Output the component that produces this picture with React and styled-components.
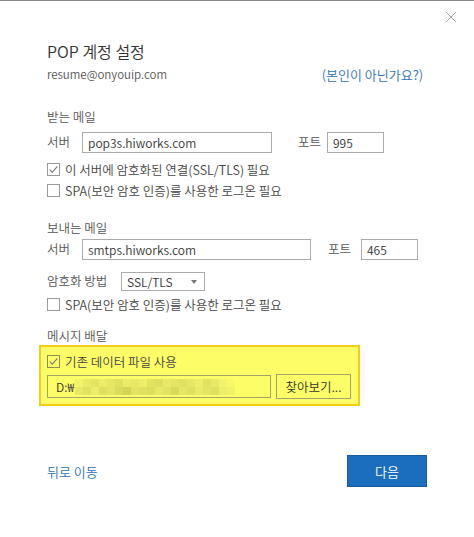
import React from "react";
import styled, { createGlobalStyle } from "styled-components";

const Global = createGlobalStyle`
  html, body { margin: 0; padding: 0; background: #fff; }
  body { font-family: "Noto Sans CJK KR", "Noto Sans", sans-serif; }
  * { box-sizing: border-box; }
`;

const Dialog = styled.div`
  position: relative;
  width: 474px;
  height: 537px;
  background: #fff;
  border-top: 1px solid #8a8a8a;
  padding: 39px 0 0 47px;
  color: #444;
  font-size: 12.5px;
  font-weight: 350;
`;

const Close = styled.button`
  position: absolute;
  top: 10px;
  right: 17px;
  width: 12px;
  height: 12px;
  padding: 0;
  border: 0;
  background: none;
  display: flex;
`;

const Title = styled.h1`
  margin: 0;
  font-size: 16px;
  line-height: 22px;
  font-weight: 350;
  color: #333;
`;

const AccountRow = styled.div`
  display: flex;
  justify-content: space-between;
  align-items: center;
  width: 376px;
  height: 18px;
  margin-top: 3px;
  line-height: 18px;
`;

const Email = styled.span`
  color: #555;
  font-size: 11.5px;
`;

const Link = styled.a`
  color: #2b72b5;
  font-size: 13px;
  text-decoration: none;
  margin-top: 2px;
`;

const SectionLabel = styled.div`
  margin-top: ${(p) => p.$mt}px;
  height: 16px;
  line-height: 16px;
  color: #555;
`;

const Row = styled.div`
  display: flex;
  align-items: center;
  margin-top: ${(p) => p.$mt || 0}px;
  height: ${(p) => p.$h || 21}px;
`;

const FieldLabel = styled.span`
  color: #555;
  width: ${(p) => p.$w}px;
  margin-left: ${(p) => p.$ml || 0}px;
  margin-top: -3px;
  flex: none;
`;

const Input = styled.div`
  width: ${(p) => p.$w}px;
  height: 21px;
  border: 1px solid #ababab;
  padding-left: 5px;
  display: flex;
  align-items: center;
  color: #333;
  font-size: 12px;
  flex: none;
`;

const Select = styled.div`
  width: 84px;
  height: 19px;
  border: 1px solid #ababab;
  padding: 0 7px 0 5px;
  display: flex;
  align-items: center;
  justify-content: space-between;
  color: #333;
  font-size: 12px;
`;

const Caret = styled.span`
  width: 0;
  height: 0;
  border-left: 3.5px solid transparent;
  border-right: 3.5px solid transparent;
  border-top: 4px solid #777;
`;

const CheckRow = styled.label`
  display: flex;
  align-items: center;
  margin-top: ${(p) => p.$mt || 0}px;
  height: 16px;
  color: #444;
`;

const Box = styled.span`
  width: 13px;
  height: 13px;
  border: 1px solid ${(p) => (p.$onYellow ? "#8e8e5a" : "#9a9a9a")};
  background: ${(p) => (p.$onYellow ? "transparent" : "#fff")};
  margin-right: 5px;
  display: flex;
  align-items: center;
  justify-content: center;
  flex: none;
`;

const Highlight = styled.div`
  width: 321px;
  height: 61px;
  margin-left: -8px;
  margin-top: 1px;
  background: #fdfd68;
  border: 2px solid #f2cf16;
  padding: 6px 0 0 6px;
`;

const PathRow = styled.div`
  display: flex;
  align-items: center;
  margin-top: 5px;
  gap: 5px;
`;

const PathInput = styled.div`
  width: 224px;
  height: 23px;
  border: 1px solid #a4a46a;
  display: flex;
  align-items: center;
  padding-left: 8px;
  color: #333;
  font-size: 12px;
`;

const Blur = styled.div`
  display: grid;
  grid-template-columns: repeat(20, 8px);
  grid-auto-rows: 8px;
  margin-left: 1px;
`;

const Cell = styled.span`
  display: block;
`;

const BrowseButton = styled.button`
  width: 75px;
  height: 25px;
  border: 1px solid #a4a46a;
  background: transparent;
  font-family: inherit;
  font-weight: 350;
  font-size: 12.5px;
  color: #333;
  padding: 0;
`;

const Footer = styled.div`
  display: flex;
  align-items: center;
  justify-content: space-between;
  width: 380px;
  margin-top: 49px;
`;

const BackLink = styled.a`
  color: #2b72b5;
  font-size: 13px;
  text-decoration: none;
`;

const NextButton = styled.button`
  width: 80px;
  height: 32px;
  background: #1b6ebd;
  border: 1px solid #175b9c;
  color: #fff;
  font-family: inherit;
  font-weight: 350;
  font-size: 13px;
  padding: 0;
`;

const Check = () => (
  <svg width="11" height="11" viewBox="0 0 11 11">
    <path d="M1.8 5.6 L4.3 8.2 L9.4 2.4" fill="none" stroke="#7a7a7a" strokeWidth="1.1" />
  </svg>
);

const blurColors = [
  "#f3f36b", "#eaea66", "#e4e463", "#ecec67", "#e6e664", "#e1e160", "#ebeb66", "#e8e865", "#eeee68", "#e3e362",
  "#dede5f", "#e9e965", "#e5e563", "#e0e061", "#e7e764", "#eded68", "#e2e262", "#e9e966", "#f2f26c", "#f8f86a",
  "#e8e866", "#e2e262", "#eded69", "#e0e060", "#e6e664", "#dcdc5c", "#d4d456", "#e4e462", "#e1e161", "#dddd5e",
  "#e8e865", "#e3e363", "#d9d95b", "#e6e664", "#e0e060", "#eaea66", "#e5e564", "#dfdf60", "#eeee69", "#f3f36b",
];

export default function App() {
  return (
    <>
      <Global />
      <Dialog>
        <Close aria-label="닫기">
          <svg width="12" height="12" viewBox="0 0 12 12">
            <path d="M1 1 L11 11 M11 1 L1 11" stroke="#a0a0a0" strokeWidth="1" />
          </svg>
        </Close>
        <Title>POP 계정 설정</Title>
        <AccountRow>
          <Email>resume@onyouip.com</Email>
          <Link href="#">(본인이 아닌가요?)</Link>
        </AccountRow>

        <SectionLabel $mt={26}>받는 메일</SectionLabel>
        <Row $mt={7}>
          <FieldLabel $w={35}>서버</FieldLabel>
          <Input $w={190}>pop3s.hiworks.com</Input>
          <FieldLabel $w={29} $ml={26}>포트</FieldLabel>
          <Input $w={57}>995</Input>
        </Row>
        <CheckRow $mt={8}>
          <Box><Check /></Box>
          이 서버에 암호화된 연결(SSL/TLS) 필요
        </CheckRow>
        <CheckRow $mt={5}>
          <Box />
          SPA(보안 암호 인증)를 사용한 로그온 필요
        </CheckRow>

        <SectionLabel $mt={22}>보내는 메일</SectionLabel>
        <Row $mt={3}>
          <FieldLabel $w={35}>서버</FieldLabel>
          <Input $w={229}>smtps.hiworks.com</Input>
          <FieldLabel $w={33} $ml={17}>포트</FieldLabel>
          <Input $w={57}>465</Input>
        </Row>
        <Row $mt={12} $h={19}>
          <FieldLabel $w={74}>암호화 방법</FieldLabel>
          <Select>
            SSL/TLS
            <Caret />
          </Select>
        </Row>
        <CheckRow $mt={5}>
          <Box />
          SPA(보안 암호 인증)를 사용한 로그온 필요
        </CheckRow>

        <SectionLabel $mt={16}>메시지 배달</SectionLabel>
        <Highlight>
          <CheckRow>
            <Box $onYellow><Check /></Box>
            기존 데이터 파일 사용
          </CheckRow>
          <PathRow>
            <PathInput>
              D:₩
              <Blur>
                {blurColors.map((c, i) => (
                  <Cell key={i} style={{ background: c }} />
                ))}
              </Blur>
            </PathInput>
            <BrowseButton>찾아보기...</BrowseButton>
          </PathRow>
        </Highlight>

        <Footer>
          <BackLink href="#">뒤로 이동</BackLink>
          <NextButton>다음</NextButton>
        </Footer>
      </Dialog>
    </>
  );
}
